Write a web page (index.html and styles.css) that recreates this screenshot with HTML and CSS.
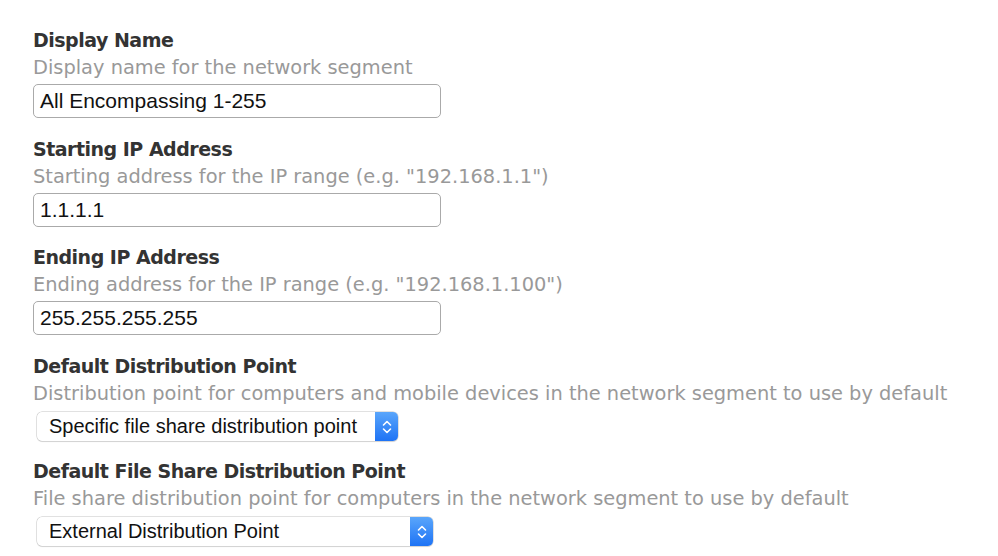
FILE: index.html
```html
<!DOCTYPE html>
<html>
<head>
<meta charset="utf-8">
<link rel="stylesheet" href="styles.css">
</head>
<body>
<div class="form">
  <div class="field f1">
    <div class="label">Display Name</div>
    <div class="desc">Display name for the network segment</div>
    <div class="input">All Encompassing 1-255</div>
  </div>
  <div class="field f2">
    <div class="label">Starting IP Address</div>
    <div class="desc">Starting address for the IP range (e.g. "192.168.1.1")</div>
    <div class="input">1.1.1.1</div>
  </div>
  <div class="field f3">
    <div class="label">Ending IP Address</div>
    <div class="desc">Ending address for the IP range (e.g. "192.168.1.100")</div>
    <div class="input">255.255.255.255</div>
  </div>
  <div class="field f4">
    <div class="label">Default Distribution Point</div>
    <div class="desc">Distribution point for computers and mobile devices in the network segment to use by default</div>
    <div class="select sel1"><span class="sel-text">Specific file share distribution point</span><span class="sel-btn"><svg width="12" height="18" viewBox="0 0 12 18"><path d="M2.5 7 L6 3.5 L9.5 7 M2.5 11 L6 14.5 L9.5 11" fill="none" stroke="#fff" stroke-width="1.6" stroke-linecap="round" stroke-linejoin="round"/></svg></span></div>
  </div>
  <div class="field f5">
    <div class="label">Default File Share Distribution Point</div>
    <div class="desc">File share distribution point for computers in the network segment to use by default</div>
    <div class="select sel2"><span class="sel-text">External Distribution Point</span><span class="sel-btn"><svg width="12" height="18" viewBox="0 0 12 18"><path d="M2.5 7 L6 3.5 L9.5 7 M2.5 11 L6 14.5 L9.5 11" fill="none" stroke="#fff" stroke-width="1.6" stroke-linecap="round" stroke-linejoin="round"/></svg></span></div>
  </div>
</div>
</body>
</html>
```
FILE: styles.css
```css
html, body { margin: 0; padding: 0; background: #fff; }
body { width: 998px; height: 556px; overflow: hidden; }
.form { padding: 27px 0 0 33px; display: flex; flex-direction: column; }
.field { display: flex; flex-direction: column; }
.f1 { height: 109px; }
.f2 { height: 108px; }
.f3 { height: 109px; }
.f4 { height: 105px; }
.label { font-family: "DejaVu Sans", sans-serif; font-weight: bold; font-size: 19px; letter-spacing: -0.5px; color: #333; line-height: 26px; }
.desc { font-family: "DejaVu Sans", sans-serif; font-size: 19.4px; color: #999; line-height: 27px; margin-top: 1px; }
.input { box-sizing: border-box; width: 408px; height: 34px; margin-top: 3px; border: 1px solid #aaa; border-radius: 5px; padding: 0 6px; font-family: "Liberation Sans", sans-serif; font-size: 21px; line-height: 32px; color: #111; }
.select { box-sizing: border-box; display: flex; align-items: stretch; height: 29px; margin-top: 5px; margin-left: 4px; border-radius: 5px; box-shadow: 0 0 0 0.5px #c4c4c4, 0 1px 1px rgba(0,0,0,0.12); background: #fff; }
.sel1 { width: 361px; }
.sel2 { width: 396px; }
.sel-text { flex: 1; padding-left: 12px; font-family: "Liberation Sans", sans-serif; font-size: 20px; line-height: 29px; color: #111; }
.sel-btn { width: 23px; display: flex; align-items: center; justify-content: center; background: linear-gradient(#5aa6fb, #1e73f5); border-radius: 0 5px 5px 0; }
```
